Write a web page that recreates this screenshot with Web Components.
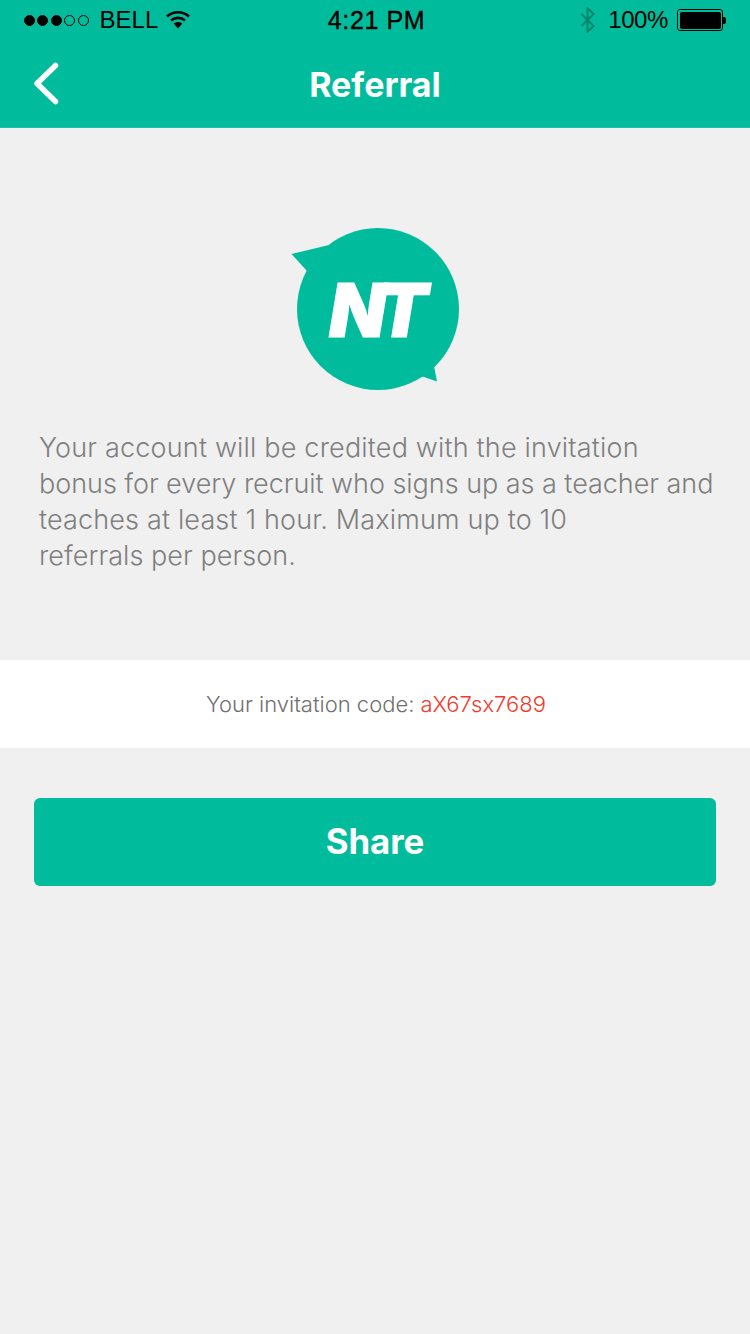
<!DOCTYPE html>
<html lang="en"><head><meta charset="utf-8"><title>Referral</title>
<style>
html,body{margin:0;padding:0;background:#f0f0f0}
body{width:750px;height:1334px;overflow:hidden;font-family:Inter,"Liberation Sans",sans-serif}
span{display:block}
</style></head><body>
<app-header title-text="Referral"></app-header>
<nt-logo></nt-logo>
<info-text><span style="letter-spacing:.18px">Your account will be credited with the invitation</span><span style="letter-spacing:-.04px">bonus for every recruit who signs up as a teacher and</span><span style="letter-spacing:.15px">teaches at least 1 hour. Maximum up to 10</span><span style="letter-spacing:.05px">referrals per person.</span></info-text>
<code-row code="aX67sx7689"></code-row>
<share-button>Share</share-button>
<script>
function def(name,html){customElements.define(name,class extends HTMLElement{constructor(){super();const r=this.attachShadow({mode:'open'});r.innerHTML=html;}
connectedCallback(){const r=this.shadowRoot;for(const a of this.getAttributeNames()){const t=r.querySelector('[data-'+a+']');if(t)t.textContent=this.getAttribute(a);}}});}
def('status-bar',`<style>
:host{display:flex;height:40px;align-items:center;padding:0 24px;font:24px/40px "Liberation Sans",sans-serif;color:#000}
.left,.right{display:flex;align-items:center;flex:1}
.right{justify-content:flex-end}
.dots{display:flex;gap:2.400px;margin-right:11px}
.d{display:block;box-sizing:border-box;width:11px;height:11px;border-radius:50%;background:#000;border:1px solid #000}
.d.o{background:none}
.time{font-size:25px;-webkit-text-stroke:.4px #000;letter-spacing:.6px;padding-left:3px}
svg{display:block}
.pct{letter-spacing:-.4px}
.batt{margin-left:9px;display:flex;align-items:center}
.shell{display:block;box-sizing:content-box;width:41px;height:17px;border:1px solid #000;border-radius:3px;padding:1.500px;}
.fill{display:block;height:100%;background:#000;border-radius:2px}
.nub{display:block;width:3px;height:7px;background:#000;border-radius:0 2px 2px 0}
</style>
<div class="left"><div class="dots"><i class="d"></i><i class="d"></i><i class="d"></i><i class="d o"></i><i class="d o"></i></div><span>BELL</span>
<svg style="margin-left:8px" width="24" height="20" viewBox="0 0 24 20"><path d="M1 6.500C7 .8 17 .8 23 6.500" fill="none" stroke="#000" stroke-width="2.600"/><path d="M5 10.500C9 7 15 7 19 10.500" fill="none" stroke="#000" stroke-width="2.600"/><path d="M7.600 13.600C10.400 11.400 13.600 11.400 16.400 13.600L12 18.500Z" fill="#000"/></svg></div>
<div class="time">4:21 PM</div>
<div class="right"><svg width="16" height="26" viewBox="0 0 16 26" style="margin-right:12px"><path d="M1.500 7l12 12-6 6V1l6 6-12 12" fill="none" stroke="#00836b" stroke-width="2"/></svg><span class="pct">100%</span>
<span class="batt"><span class="shell"><span class="fill"></span></span><span class="nub"></span></span></div>`);
def('app-header',`<style>
:host{display:block;background:#00bc9c;height:128px;box-sizing:border-box;border-bottom:1px solid #19c4a6}
nav{height:87px;display:flex;align-items:center;justify-content:center;position:relative}
h1{margin:0;padding-top:2px;font:700 34px/1 Inter,sans-serif;color:#fff}
svg{position:absolute;left:33px;top:22px}
</style><status-bar></status-bar><nav><svg width="26" height="43" viewBox="0 0 26 43"><path d="M22.500 3.500L4 21.500L22.500 39.500" fill="none" stroke="#fff" stroke-width="5.500" stroke-linecap="round" stroke-linejoin="round"/></svg><h1 data-title-text></h1></nav>`);
def('nt-logo',`<style>
:host{display:block;padding-top:100px;box-sizing:border-box;height:302px}
svg{display:block}
text{font:italic 900 74px Inter,sans-serif;fill:#fff;stroke:#fff;stroke-width:1px;letter-spacing:-9px}
</style><svg width="750" height="175" viewBox="0 100 750 175"><circle cx="378" cy="181" r="81" fill="#00bc9c"/><path d="M291.500 126L329 117L307 143ZM437 253.500L434 238L421 248Z" fill="#00bc9c"/><text x="329" y="208.500">NT</text></svg>`);
def('info-text',`<style>
:host{display:block;box-sizing:border-box;height:230px;padding:0 0 0 39px;font:300 27px/36px Inter,sans-serif;color:#7f7f7f;white-space:nowrap}
</style><slot></slot>`);
def('code-row',`<style>
:host{display:flex;align-items:center;justify-content:center;height:88px;background:#fff;font:300 22px/1 Inter,sans-serif;color:#6f6f6f;padding-left:2px;box-sizing:border-box}
b{font-weight:300;color:#f4382c;margin-left:6px}
</style>Your invitation code:<b data-code></b>`);
def('share-button',`<style>
:host{display:flex;align-items:center;justify-content:center;height:88px;box-sizing:border-box;padding-bottom:1px;margin:50px 34px 0;background:#00bc9c;border-radius:6px;color:#fff;font:700 34.800px/1 Inter,sans-serif}
</style><slot></slot>`);
</script>
</body></html>
